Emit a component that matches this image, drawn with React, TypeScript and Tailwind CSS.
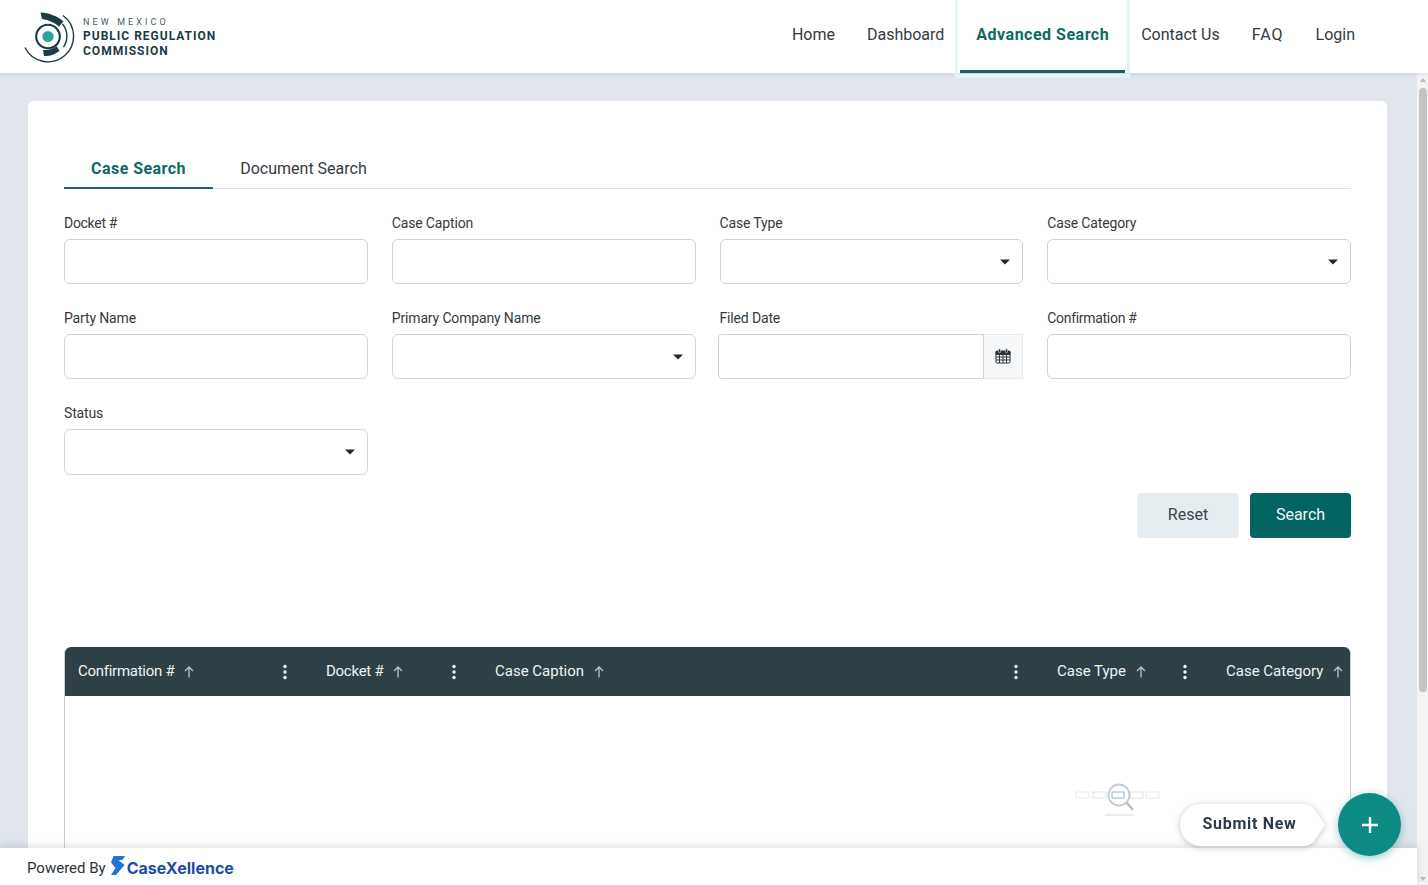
import React from "react";

const Logo = () => (
  <svg width="54" height="56" viewBox="0 0 54 56" className="shrink-0">
    <circle cx="24" cy="27.5" r="5.6" fill="#2ba49a" />
    <circle cx="24" cy="27.5" r="11.8" fill="none" stroke="#1d3b45" strokeWidth="2.1" />
    <path d="M16.5 3.5C25 4 33.5 7 39.5 12.5L35 17.5C30.500 13.500 25 11 18 10Z" fill="#1d3b45" />
    <path d="M19 41C24.500 41.500 29 40 32.500 37L35.500 42C31 45.500 25.500 47.500 20 47Z" fill="#1d3b45" />
    <path d="M38.500 15A19 19 0 0 1 39.500 38" fill="none" stroke="#1d3b45" strokeWidth="1.4" />
    <path d="M1 38.500A25.600 25.600 0 1 0 39 6.500" fill="none" stroke="#1d3b45" strokeWidth="1.4" />
  </svg>
);

const NavItem = ({ children, active, className = "" }: { children: React.ReactNode; active?: boolean; className?: string }) =>
  active ? (
    <div className="relative flex h-[73px] items-center pb-[4px] font-bold tracking-[0.5px] text-[#0b6a64]">
      <div className="absolute -left-[21px] -right-[21px] top-0 h-[78px] border-x-[3px] border-b-[4px] border-[#e3f3f7]" />
      <div className="absolute -left-[16px] -right-[16px] bottom-0 h-[3px] bg-[#14635f]" />
      <span className="relative">{children}</span>
    </div>
  ) : (
    <div className={`flex h-[73px] items-center pb-[4px] text-[#333b3f] ${className}`}>{children}</div>
  );

const Caret = () => (
  <span className="absolute right-[12px] top-1/2 h-0 w-0 -translate-y-1/2 border-x-[5px] border-t-[5px] border-x-transparent border-t-[#1f2a2e]" />
);

const Label = ({ children }: { children: React.ReactNode }) => (
  <div className="mb-[6px] h-[20px] text-[14px] leading-[20px] tracking-[-0.15px] text-[#333b3f]">{children}</div>
);

const Field = ({ label, select, h = "h-[45px]", hash }: { label: string; select?: boolean; h?: string; hash?: boolean }) => (
  <div>
    <Label>{hash ? <span className="tracking-[-0.3px]">{label}</span> : label}</Label>
    <div className={`relative ${h} rounded-[6px] border border-[#cfd3d6] bg-white`}>{select && <Caret />}</div>
  </div>
);

const DateField = () => (
  <div>
    <Label>Filed Date</Label>
    <div className="flex h-[45px]">
      <div className="-ml-[2px] flex-1 rounded-l-[4px] border border-[#cfd3d6] bg-white" />
      <div className="flex w-[39px] items-center justify-center border-y border-r border-[#e6e9ec] bg-[#f5f7f9] pb-[1px]">
        <svg width="16" height="16" viewBox="0 0 16 16" fill="none" stroke="#2b3438">
          <rect x="1" y="3" width="14" height="12" rx="1" fill="#fff" />
          <path d="M1 3.500h14V6.500H1z" fill="#2b3438" />
          <path d="M1 9h14M1 12h14M4.500 6.500V15M8 6.500V15M11.500 6.500V15" strokeWidth="1" />
          <rect x="3.500" y="0.800" width="2" height="4" rx="1" fill="#2b3438" stroke="#fff" strokeWidth="0.500" />
          <rect x="10.500" y="0.800" width="2" height="4" rx="1" fill="#2b3438" stroke="#fff" strokeWidth="0.500" />
        </svg>
      </div>
    </div>
  </div>
);

const Arrow = () => (
  <svg width="10" height="12" viewBox="0 0 10 12" fill="none" stroke="#b9c4c6" strokeWidth="1.300" className="ml-[10px] shrink-0">
    <path d="M5 11.500V1M1 5l4-4 4 4" />
  </svg>
);

const Dots = () => (
  <svg width="4" height="16" viewBox="0 0 4 16" fill="#f2f5f5" className="shrink-0">
    <circle cx="2" cy="2.500" r="1.700" />
    <circle cx="2" cy="8" r="1.700" />
    <circle cx="2" cy="13.500" r="1.700" />
  </svg>
);

const Col = ({ label, w, last, pl = "pl-[14px]", hash }: { label: string; w: string; last?: boolean; pl?: string; hash?: boolean }) => (
  <div className={`flex ${w} shrink-0 items-center justify-between ${pl} ${last ? "" : "pr-[25px]"}`}>
    <div className="flex items-center whitespace-nowrap">
      {hash ? <span className="tracking-[-0.27px]">{label}</span> : label}
      <Arrow />
    </div>
    {!last && <Dots />}
  </div>
);

const Empty = () => (
  <svg width="86" height="36" viewBox="0 0 86 36" fill="none" className="absolute left-[1010px] top-[135px]">
    <g stroke="#e3e6e8" strokeWidth="0.800">
      <rect x="1" y="10" width="13" height="6" />
      <rect x="71" y="10" width="13" height="6" />
    </g>
    <g stroke="#cfdbe0" strokeWidth="0.800">
      <rect x="18" y="10" width="13" height="6" />
      <rect x="55" y="10" width="13" height="6" />
    </g>
    <rect x="37" y="10" width="12" height="6" stroke="#7fb2cc" strokeWidth="0.900" />
    <circle cx="44" cy="13" r="10.500" stroke="#c2cbcd" strokeWidth="1.800" />
    <path d="M51.500 20.500L58 28" stroke="#b8c2c4" strokeWidth="2.400" />
    <path d="M30 33h29" stroke="#d5dbdd" strokeWidth="1" />
  </svg>
);

export default function App() {
  return (
    <div className="relative flex h-[885px] w-[1428px] flex-col overflow-hidden bg-white text-[#333b3f] [font-family:Roboto,'Liberation_Sans',sans-serif]">
      <header className="relative z-10 flex h-[73px] shrink-0 items-center justify-between bg-white pl-[24px] pr-[73px] shadow-[0_1px_4px_rgba(40,60,80,0.12)]">
        <div className="flex items-center gap-[5px]">
          <Logo />
          <div className="pt-[1px] text-[#1d3b45]">
            <div className="text-[9px] leading-[14px] tracking-[3.1px] text-[#4a5c63]">NEW MEXICO</div>
            <div className="text-[12px] font-bold leading-[15px] tracking-[1px]">PUBLIC REGULATION</div>
            <div className="text-[12px] font-bold leading-[15px] tracking-[1px]">COMMISSION</div>
          </div>
        </div>
        <nav className="flex gap-8 text-[16px]">
          <NavItem>Home</NavItem>
          <NavItem>Dashboard</NavItem>
          <NavItem active>Advanced Search</NavItem>
          <NavItem>Contact Us</NavItem>
          <NavItem className="tracking-[1px]">FAQ</NavItem>
          <NavItem>Login</NavItem>
        </nav>
      </header>

      <div className="flex min-h-0 flex-1">
        <main className="min-w-0 flex-1 overflow-hidden bg-[#e1e6ed] pl-[28px] pr-[30px] pt-[28px]">
          <section className="h-[900px] rounded-t-[6px] bg-white px-[36px] pt-[49px]">
            <div className="flex h-[39px] border-b border-[#dfe3e6] text-[16px]">
              <div className="-mb-px flex w-[149px] items-center justify-center border-b-2 border-[#1f5f87] font-bold tracking-[0.45px] text-[#0b6a64]">
                Case Search
              </div>
              <div className="flex w-[181px] items-center justify-center pb-[1px] text-[#333b3f]">Document Search</div>
            </div>

            <div className="mt-[24px] grid grid-cols-4 gap-x-6 gap-y-[24px]">
              <Field label="Docket #" hash />
              <Field label="Case Caption" />
              <Field label="Case Type" select />
              <Field label="Case Category" select />
              <Field label="Party Name" />
              <Field label="Primary Company Name" select />
              <DateField />
              <Field label="Confirmation #" hash />
              <Field label="Status" select h="h-[46px]" />
            </div>

            <div className="mt-[18px] flex justify-end gap-[11px] text-[16px]">
              <button className="h-[45px] w-[102px] rounded-[4px] bg-[#e6edf1] pb-[2px] text-[#39464b]">Reset</button>
              <button className="h-[45px] w-[101px] rounded-[4px] bg-[#036462] pb-[2px] text-[#eef8f7]">Search</button>
            </div>

            <div className="relative mt-[109px] h-[300px] rounded-t-[6px] border-x border-[#c9ced1]">
              <div className="flex h-[49px] overflow-hidden rounded-t-[6px] bg-[#2e4045] text-[15px] text-[#eef2f2]">
                <Col label="Confirmation #" w="w-[247px]" pl="pl-[13px]" hash />
                <Col label="Docket #" w="w-[169px]" hash />
                <Col label="Case Caption" w="w-[562px]" />
                <Col label="Case Type" w="w-[169px]" />
                <Col label="Case Category" w="w-[138px]" last />
              </div>
              <Empty />
            </div>
          </section>
        </main>

        <aside className="flex w-[11px] shrink-0 flex-col items-center bg-[#f3f3f3]">
          <div className="mt-[5px] h-0 w-0 border-x-[3px] border-b-[4px] border-x-transparent border-b-[#b8b8b8]" />
          <div className="mt-[6px] h-[604px] w-[8px] rounded-[4px] bg-[#c4c2c4]" />
          <div className="mt-auto mb-[4px] h-0 w-0 border-x-[3px] border-t-[4px] border-x-transparent border-t-[#b8b8b8]" />
        </aside>
      </div>

      <footer className="absolute bottom-0 left-0 z-10 flex h-[37px] w-[1417px] items-center bg-white pl-[27px] pt-[3px] shadow-[0_-2px_8px_rgba(50,70,90,0.18)]">
        <span className="text-[15px] text-[#2b3438]">Powered By</span>
        <svg width="14" height="19" viewBox="0 0 14 19" className="ml-[5px] mb-[5px]">
          <path d="M2.500 0H14L11.500 4H7.500L13.500 9L5 19H0L4.500 12L0 6.500Z" fill="#1f73d9" />
        </svg>
        <span className="ml-[2px] text-[16px] font-bold text-[#1a4ea8] [font-family:Inter,Roboto,sans-serif]">CaseXellence</span>
      </footer>

      <div className="absolute left-[1180px] top-[804px] z-20 flex h-[42px] items-center drop-shadow-[0_1px_3px_rgba(40,60,70,0.3)]">
        <div className="flex h-[42px] w-[135px] items-center justify-center rounded-l-[21px] rounded-r-[10px] bg-white pb-[2px] pl-[4px] text-[16px] font-bold tracking-[0.7px] text-[#2c3a47]">
          Submit New
        </div>
        <span className="-ml-[2px] h-0 w-0 border-y-[18px] border-l-[12px] border-y-transparent border-l-white" />
      </div>
      <div className="absolute left-[1338px] top-[793px] z-20 flex h-[63px] w-[63px] items-center justify-center rounded-full bg-[#0d8a84] shadow-[0_2px_8px_rgba(13,138,132,0.45)]">
        <svg width="18" height="18" viewBox="0 0 18 18" stroke="#fff" strokeWidth="2.400">
          <path d="M9 1v16M1 9h16" />
        </svg>
      </div>
    </div>
  );
}
